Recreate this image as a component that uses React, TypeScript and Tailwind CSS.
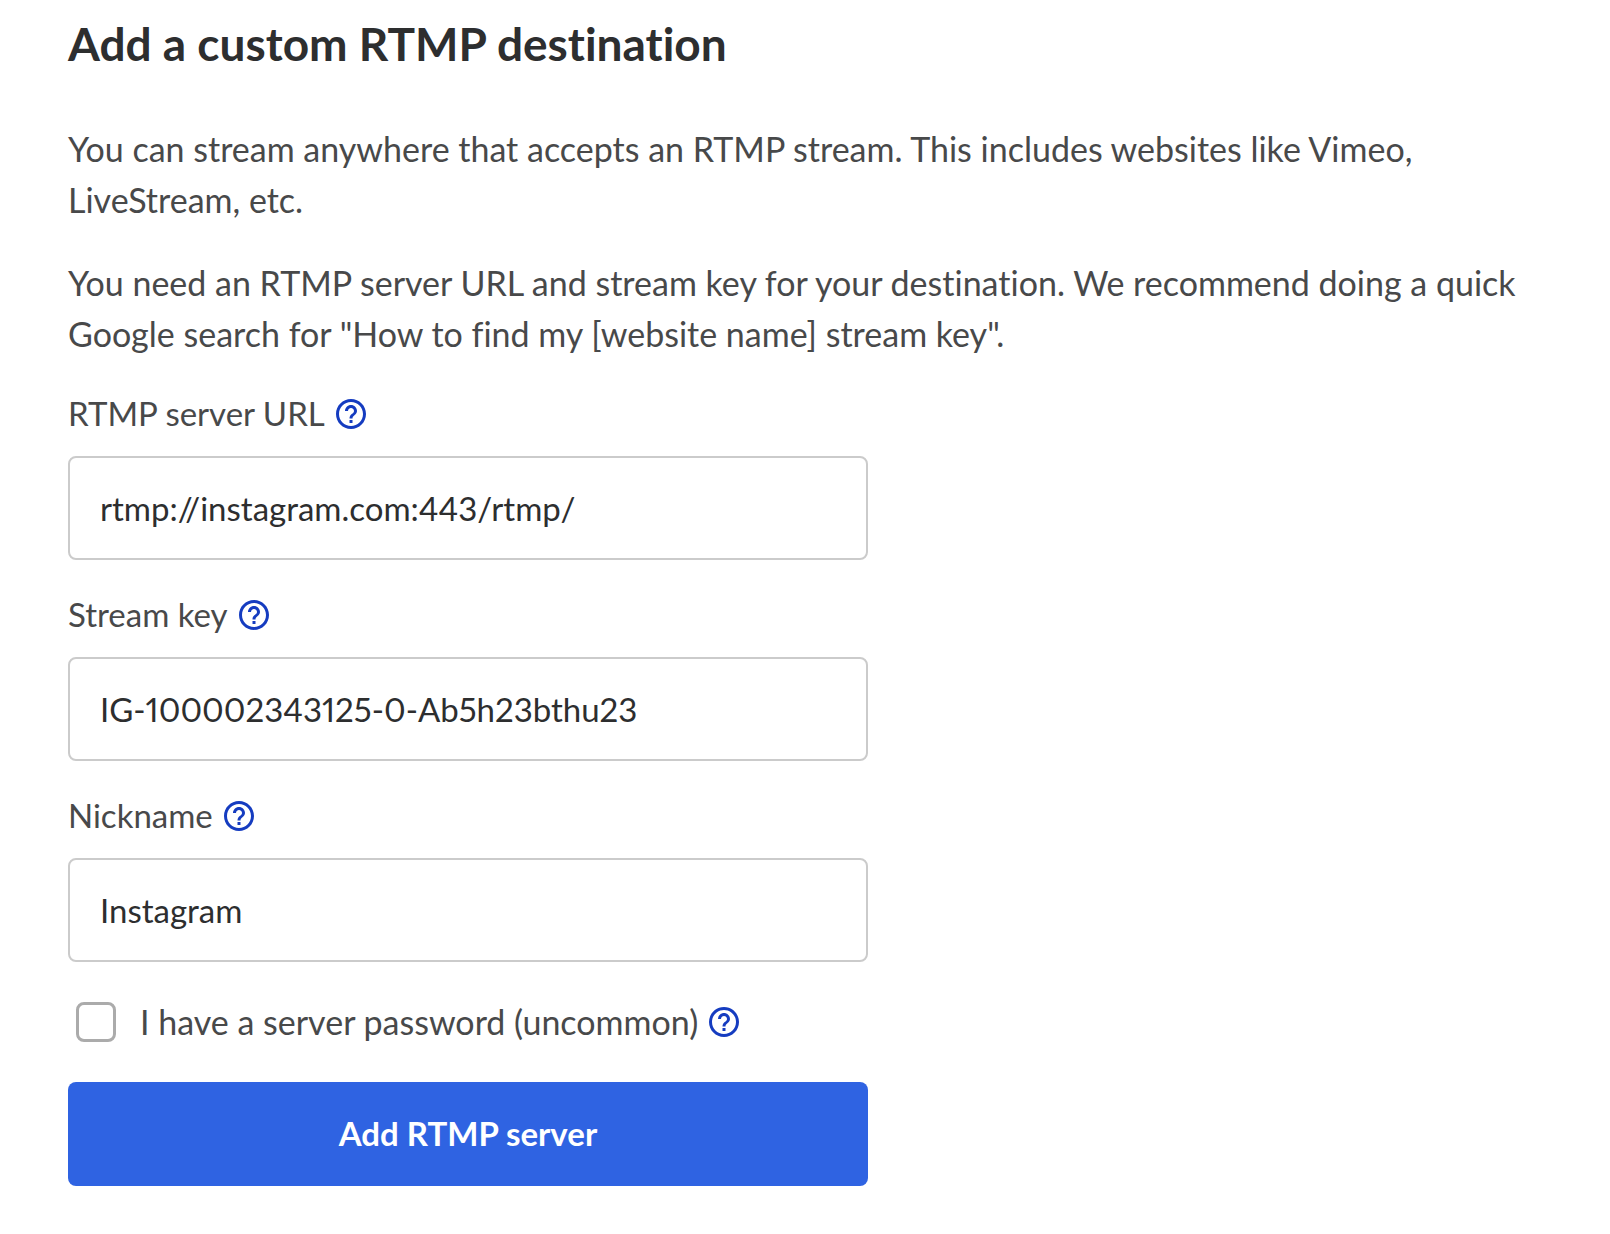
import React, { useState } from 'react';
import { MdHelpOutline } from 'react-icons/md';

interface HelpButtonProps {
  topic: string;
}

const HelpButton: React.FC<HelpButtonProps> = ({ topic }) => (
  <button type="button" aria-label={`Help: ${topic}`} className="shrink-0 text-[#153cc0]">
    <MdHelpOutline size={36} />
  </button>
);

interface TextFieldProps {
  id: string;
  label: string;
  value: string;
  onChange: (val: string) => void;
}

const TextField: React.FC<TextFieldProps> = ({ id, label, value, onChange }) => (
  <div className="flex flex-col gap-4">
    <div className="flex items-center gap-2 text-[33px] leading-[53px]">
      <label htmlFor={id}>{label}</label>
      <HelpButton topic={label} />
    </div>
    <input
      id={id}
      type="text"
      value={value}
      onChange={(e) => onChange(e.target.value)}
      className="h-26 w-full rounded-lg border-2 border-[#cbcbcb] bg-white px-[30px] text-[33px] text-[#2d2e2f] proportional-nums outline-none focus:border-[#2f63e2]"
    />
  </div>
);

const App: React.FC = () => {
  const [serverUrl, setServerUrl] = useState('rtmp://instagram.com:443/rtmp/');
  const [streamKey, setStreamKey] = useState('IG-100002343125-0-Ab5h23bthu23');
  const [nickname, setNickname] = useState('Instagram');
  const [hasPassword, setHasPassword] = useState(false);

  return (
    <main className="min-h-screen bg-white px-17 pt-[15px] pb-12 font-['Lato',sans-serif] text-[#48494a] [font-variant-ligatures:none]">
      <h1 className="text-[46px] leading-[58px] font-bold text-[#2d2e2f]">
        Add a custom RTMP destination
      </h1>

      <div className="mt-[50px] flex flex-col gap-8 text-[34px] leading-[51px]">
        <p>
          You can stream anywhere that accepts an RTMP stream. This includes websites like Vimeo,
          LiveStream, etc.
        </p>
        <p>
          You need an RTMP server URL and stream key for your destination. We recommend doing a quick
          Google search for "How to find my [website name] stream key".
        </p>
      </div>

      <form
        className="mt-7 flex max-w-[800px] flex-col gap-7"
        onSubmit={(e) => e.preventDefault()}
      >
        <TextField id="server-url" label="RTMP server URL" value={serverUrl} onChange={setServerUrl} />
        <TextField id="stream-key" label="Stream key" value={streamKey} onChange={setStreamKey} />
        <TextField id="nickname" label="Nickname" value={nickname} onChange={setNickname} />

        <div className="my-3 flex items-center pl-2 text-[34px] leading-10">
          <input
            id="has-password"
            type="checkbox"
            checked={hasPassword}
            onChange={(e) => setHasPassword(e.target.checked)}
            className="size-10 shrink-0 appearance-none rounded-lg border-3 border-[#ababab] bg-white checked:bg-[#2f63e2]"
          />
          <label htmlFor="has-password" className="pr-2 pl-6">
            I have a server password (uncommon)
          </label>
          <HelpButton topic="server password" />
        </div>

        <button type="submit" className="h-26 rounded-lg bg-[#2f63e2] text-[33px] font-bold text-white">
          Add RTMP server
        </button>
      </form>
    </main>
  );
};

export default App;
